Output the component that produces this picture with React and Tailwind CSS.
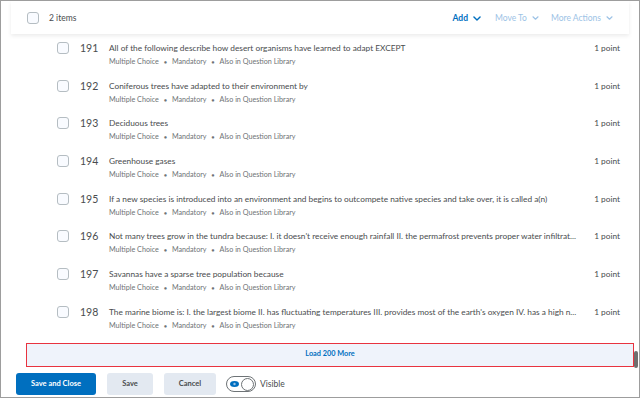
import React from 'react';

const QUESTIONS = [
  { n: 191, text: 'All of the following describe how desert organisms have learned to adapt EXCEPT' },
  { n: 192, text: 'Coniferous trees have adapted to their environment by' },
  { n: 193, text: 'Deciduous trees' },
  { n: 194, text: 'Greenhouse gases' },
  { n: 195, text: 'If a new species is introduced into an environment and begins to outcompete native species and take over, it is called a(n)' },
  { n: 196, text: "Not many trees grow in the tundra because: I. it doesn't receive enough rainfall II. the permafrost prevents proper water infiltrat..." },
  { n: 197, text: 'Savannas have a sparse tree population because' },
  { n: 198, text: "The marine biome is: I. the largest biome II. has fluctuating temperatures III. provides most of the earth's oxygen IV. has a high n..." },
];

const Chevron = ({ className }) => (
  <svg viewBox="0 0 10 6" className={className} fill="none" stroke="currentColor" strokeWidth="1.8" strokeLinecap="round" strokeLinejoin="round">
    <path d="M1.2 1.2 5 4.8 8.8 1.2" />
  </svg>
);

const Checkbox = () => (
  <div className="w-[12px] h-[12px] rounded-[3px] border border-[#b5bdc2] bg-[#f9fbff] shrink-0" />
);

export default function App() {
  return (
    <div
      className="w-[640px] h-[398px] relative overflow-hidden bg-white border border-[#9d9d9d] flex flex-col text-[#494c4e]"
      style={{ fontFamily: 'Lato, "Open Sans", sans-serif' }}
    >
      {/* header */}
      <div className="h-[33px] shrink-0 pl-[16px] pr-[16px] pt-[1px] flex items-center bg-white shadow-[0_2px_4px_rgba(0,0,0,0.08)] mx-[10px] z-10">
        <Checkbox />
        <span className="ml-[10px] text-[8.5px]">2 items</span>
        <div className="ml-auto flex items-center text-[8.5px]">
          <span className="flex items-center gap-[5px] font-bold text-[#006fbf]">
            Add <Chevron className="w-[8px] h-[5px]" />
          </span>
          <span className="ml-[14px] flex items-center gap-[5px] text-[#9dc3e6]">
            Move To <Chevron className="w-[7px] h-[4px]" />
          </span>
          <span className="ml-[12px] flex items-center gap-[5px] text-[#9dc3e6]">
            More Actions <Chevron className="w-[7px] h-[4px]" />
          </span>
        </div>
      </div>

      {/* list */}
      <div className="flex-1 relative">
        <div className="pl-[56px] pr-[19px]">
          {QUESTIONS.map((q) => (
            <div key={q.n} className="h-[37.7px] pt-[8px] flex items-start">
              <div className="h-[12px] flex items-center">
                <Checkbox />
              </div>
              <span className="w-[29px] ml-[11px] text-[10.5px] leading-[12px]">{q.n}</span>
              <div className="flex-1 min-w-0">
                <div className="text-[8.3px] leading-[12px] whitespace-nowrap">{q.text}</div>
                <div className="mt-[3px] text-[7.2px] leading-[10px] text-[#6e7376] flex items-center gap-[5px]">
                  <span>Multiple Choice</span>
                  <span className="text-[5px]">●</span>
                  <span>Mandatory</span>
                  <span className="text-[5px]">●</span>
                  <span>Also in Question Library</span>
                </div>
              </div>
              <span className="text-[8.3px] leading-[12px] shrink-0">1 point</span>
            </div>
          ))}
        </div>
        <div className="mt-[7px] ml-[25px] mr-[5px] h-[24px] bg-[#eff3fb] border border-[#e8333f] flex items-center justify-center text-[7.3px] font-bold text-[#006fbf]">
          Load 200 More
        </div>
        <div className="absolute right-[1px] top-[317px] w-[4px] h-[17px] rounded-[2px] bg-[#6f6f6f]" />
      </div>

      {/* footer */}
      <div className="h-[31px] shrink-0 flex items-center pl-[15px] pt-[4px] gap-[11px] bg-white">
        <button className="h-[22px] w-[80px] rounded-[3px] bg-[#006fbf] text-white text-[7.5px] font-bold">Save and Close</button>
        <button className="h-[22px] w-[46px] rounded-[3px] bg-[#e3e9f1] text-[7.5px] font-bold">Save</button>
        <button className="h-[22px] w-[52px] rounded-[3px] bg-[#e3e9f1] text-[7.5px] font-bold">Cancel</button>
        <div className="flex items-center gap-[4px] -ml-[1px]">
          <div className="w-[30px] h-[16px] rounded-full border border-[#6e7376] flex items-center justify-between px-[1px]">
            <svg viewBox="0 0 12 8" className="w-[9px] h-[6px] ml-[2px]">
              <ellipse cx="6" cy="4" rx="6" ry="4" fill="#006fbf" />
              <circle cx="6" cy="4" r="1.6" fill="#9dc3e6" />
            </svg>
            <div className="w-[13px] h-[13px] rounded-full border border-[#6e7376] bg-white" />
          </div>
          <span className="text-[8.5px]">Visible</span>
        </div>
      </div>
    </div>
  );
}
